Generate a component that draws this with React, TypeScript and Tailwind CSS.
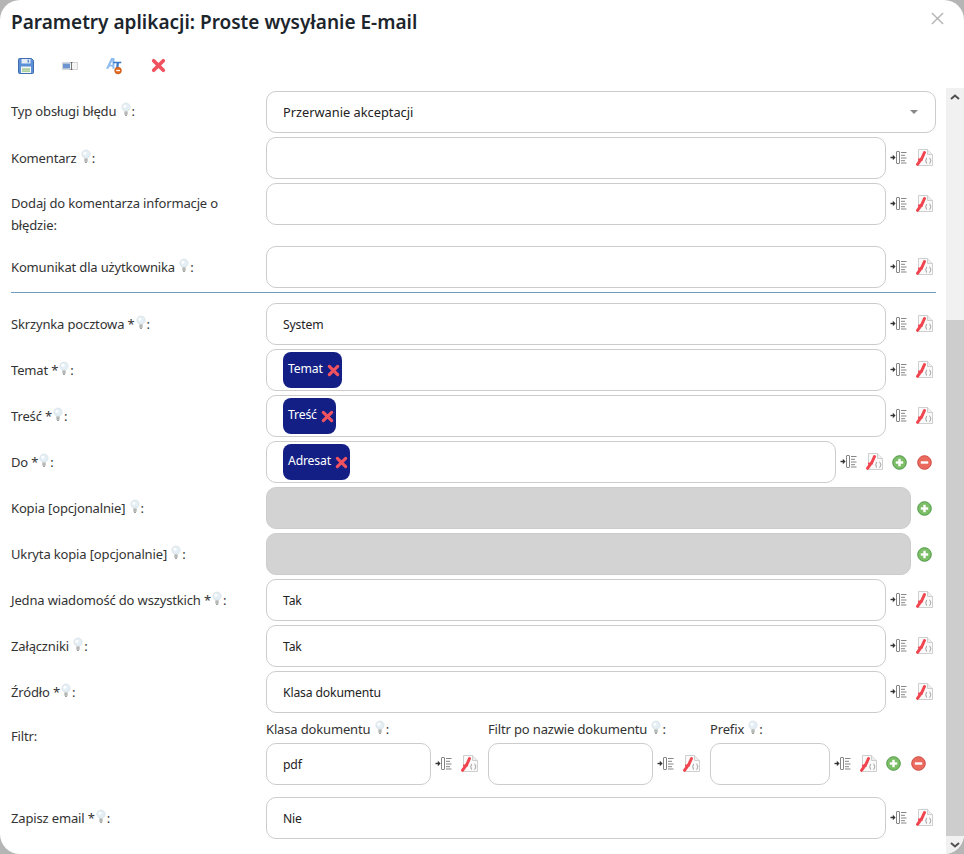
const FONT = "font-['Noto_Sans',sans-serif]";

const Bulb = () => (
  <svg viewBox="0 0 12 16" className="inline-block h-[15px] w-[12px] align-[-1px]" aria-hidden="true">
    <circle cx="6" cy="5.5" r="4.4" fill="#e3eef5" stroke="#d4dde2" strokeWidth="0.7" />
    <circle cx="4.8" cy="4.4" r="1.6" fill="#ffffff" />
    <rect x="4.2" y="10" width="3.6" height="3.6" fill="#b5b9b6" />
    <rect x="5" y="13.6" width="2" height="1.2" fill="#8d918e" />
  </svg>
);

const SaveIcon = () => (
  <svg viewBox="0 0 16 16" className="h-4 w-4" aria-hidden="true">
    <path d="M.5 1.5a1 1 0 0 1 1-1h12l2 2v12a1 1 0 0 1-1 1h-13a1 1 0 0 1-1-1Z" fill="#5b8fd6" stroke="#3f6db0" />
    <rect x="3.5" y="1" width="9" height="4.5" fill="#e8eef7" />
    <rect x="9.5" y="1.6" width="1.6" height="3" fill="#5b8fd6" />
    <rect x="3" y="8.5" width="10" height="6.5" fill="#f3f6f4" />
    <rect x="4" y="10.5" width="8" height="1.2" fill="#8fbf7a" />
    <rect x="4" y="12.5" width="8" height="1.2" fill="#8fbf7a" />
  </svg>
);

const FieldIcon = () => (
  <svg viewBox="0 0 16 8" className="h-2 w-4" aria-hidden="true">
    <rect x="0.5" y="0.5" width="15" height="7" fill="#f4f4f4" stroke="#d6d6d6" />
    <rect x="1" y="1.5" width="7" height="5" fill="#6d94cf" />
    <path d="M8.5 0.5h2M8.5 7.5h2M9.5 0.5v7" stroke="#555" strokeWidth="0.8" fill="none" />
  </svg>
);

const TranslateIcon = () => (
  <svg viewBox="0 0 17 18" className="h-[18px] w-[17px]" aria-hidden="true">
    <path fillRule="evenodd" d="M0 12 5.500 0.500h3.500V12H6.800V9.500H3.800L2.500 12ZM4.700 7.800h2.100V3.500Z" fill="#8fbcee" />
    <path d="M7.500 4.500h9l-.4 1.500h-2.300l-.9 6.500H10.600l.7-6.500H7.500Z" fill="#3a78c9" />
    <circle cx="12.800" cy="13.800" r="3.600" fill="#e3691d" stroke="#b94f12" strokeWidth="0.6" />
    <rect x="10.800" y="13.100" width="4" height="1.400" fill="#fff" />
  </svg>
);

const RedX = ({ size = "h-[13px] w-[13px]" }: { size?: string }) => (
  <svg viewBox="0 0 14 14" className={size} aria-hidden="true">
    <path d="M2.500 2.500 11.500 11.500M11.500 2.500 2.500 11.500" stroke="#f0525f" strokeWidth="3.400" strokeLinecap="round" />
  </svg>
);

const InsertIcon = () => (
  <svg viewBox="0 0 17 13" className="h-[13px] w-[17px] shrink-0" aria-hidden="true">
    <path d="M0.500 6.500H4" stroke="#333" strokeWidth="1.400" />
    <path d="M2.800 3.800 5.600 6.500 2.800 9.200Z" fill="#333" />
    <rect x="6.500" y="0.500" width="3" height="12" rx="0.500" fill="#fff" stroke="#858585" />
    <path d="M11 1.500h5.500M11 4.300h4M11 7h5.500M11 9.700h4M11 12h5.500" stroke="#858585" strokeWidth="1" />
  </svg>
);

const ScriptIcon = () => (
  <svg viewBox="0 0 17 17" className="h-[17px] w-[17px] shrink-0" aria-hidden="true">
    <path d="M2.500 0.500h9l5 5v11h-14Z" fill="#fafafa" stroke="#cfcfcf" />
    <path d="M11.500 0.500v5h5" fill="#eee" stroke="#cfcfcf" />
    <path d="M1.500 15.300 6 9 8.500 3.500" stroke="#f0444f" strokeWidth="3" fill="none" strokeLinecap="round" />
    <path d="M2 10.500h5" stroke="#f0444f" strokeWidth="1.800" />
    <path d="M11 9c-1 0-.6 2.300-1.400 2.800.8.500.4 2.800 1.400 2.800M13.500 9c1 0 .6 2.300 1.400 2.800-.8.500-.4 2.800-1.400 2.800" stroke="#8a8a8a" strokeWidth="0.900" fill="none" />
  </svg>
);

const RoundBtn = ({ kind }: { kind: "plus" | "minus" }) => (
  <svg viewBox="0 0 15 15" className="h-[15px] w-[15px] shrink-0" aria-hidden="true">
    <circle cx="7.500" cy="7.500" r="6.800" fill={kind === "plus" ? "#7cbd68" : "#ea6a5e"} stroke={kind === "plus" ? "#4f9a44" : "#cf4a42"} />
    <rect x="3.800" y="6.300" width="7.400" height="2.400" fill="#fff" />
    {kind === "plus" && <rect x="6.300" y="3.800" width="2.400" height="7.400" fill="#fff" />}
  </svg>
);

const Label = ({ text, star, bulb = true }: { text: string; star?: boolean; bulb?: boolean }) => (
  <span>
    {text}
    {star ? " *" : " "}
    {bulb && <Bulb />}:
  </span>
);

const Chip = ({ text }: { text: string }) => (
  <span className="flex h-9 items-center gap-1 rounded-lg bg-[#141f85] pl-[5px] pr-[2px] text-[12.2px] text-white">
    <span className="pb-[2px]">{text}</span>
    <RedX />
  </span>
);

const Tools = () => (
  <div className="ml-[4px] flex items-center gap-[9px] pb-[2px]">
    <InsertIcon />
    <ScriptIcon />
  </div>
);

type RowProps = {
  label: React.ReactNode;
  value?: string;
  chip?: string;
  disabled?: boolean;
  plus?: boolean;
  minus?: boolean;
};

const Row = ({ label, value, chip, disabled, plus, minus }: RowProps) => (
  <div className="mb-1 flex h-[42px] text-[13px] tracking-[-0.15px] text-[#333]">
    <div className="w-[266px] shrink-0 self-center pb-[1px] pl-[11px] pr-3 leading-[22px]">{label}</div>
    <div
      className={`flex min-w-0 flex-1 items-center rounded-[10px] border border-[#ccc] px-4 text-[12.2px] text-[#222] ${
        disabled ? "bg-[#d3d3d3]" : "bg-white"
      }`}
    >
      {chip ? <Chip text={chip} /> : <span className="pt-[2px]">{value}</span>}
    </div>
    <div className="flex items-center">
      {!disabled && <Tools />}
      {plus && (
        <span className={disabled ? "ml-[6px]" : "ml-[9px]"}>
          <RoundBtn kind="plus" />
        </span>
      )}
      {minus && (
        <span className="ml-[10px]">
          <RoundBtn kind="minus" />
        </span>
      )}
      {!plus && <span className="w-[3px]" />}
      {disabled && <span className="w-[4px]" />}
      {minus && <span className="w-[4px]" />}
    </div>
  </div>
);

const SubField = ({ label, value, w, extra }: { label: React.ReactNode; value?: string; w: string; extra?: boolean }) => (
  <div className="flex flex-col">
    <div className="h-[26px] leading-[25px]">{label}</div>
    <div className="flex h-[42px]">
      <div className={`flex items-center rounded-[10px] border border-[#ccc] bg-white px-4 text-[12.2px] text-[#222] ${w}`}>
        <span className="pt-[2px]">{value}</span>
      </div>
      <Tools />
      {extra && (
        <div className="ml-[9px] flex items-center gap-[10px] pb-[2px]">
          <RoundBtn kind="plus" />
          <RoundBtn kind="minus" />
        </div>
      )}
    </div>
  </div>
);

export default function App() {
  return (
    <div className={`${FONT} h-[854px] w-[964px] overflow-hidden bg-[#b5b5b5]`}>
      <div className="flex h-full flex-col overflow-hidden rounded-[20px] bg-white">
        <header className="flex h-[44px] shrink-0 items-start justify-between pl-[11px] pr-[20px] pt-[8px]">
          <h1 className="text-[19px] font-semibold leading-[28px] text-[#1c252c]">
            Parametry aplikacji: Proste wysyłanie E-mail
          </h1>
          <svg viewBox="0 0 14 14" className="mt-[4px] h-[13px] w-[13px]" aria-hidden="true">
            <path d="M1 1 13 13M13 1 1 13" stroke="#b4b4b4" strokeWidth="1.500" />
          </svg>
        </header>

        <div className="flex h-[44px] shrink-0 items-center pb-[1px]">
          <span className="ml-[18px] flex w-4 justify-center"><SaveIcon /></span>
          <span className="ml-[28px] flex w-4 justify-center"><FieldIcon /></span>
          <span className="ml-[28px] flex w-4 justify-center"><TranslateIcon /></span>
          <span className="ml-[28px] flex w-4 justify-center"><RedX size="h-[15px] w-[15px]" /></span>
        </div>

        <div className="flex min-h-0 flex-1">
          <main className="min-w-0 flex-1 overflow-hidden pr-[10px] pt-[3px]">
            <div className="mb-1 flex h-[42px] text-[13px] tracking-[-0.15px] text-[#333]">
              <div className="w-[266px] shrink-0 self-center pb-[1px] pl-[11px]"><Label text="Typ obsługi błędu" /></div>
              <div className="flex flex-1 items-center justify-between rounded-[10px] border border-[#ccc] bg-white pl-4 pr-[17px] text-[12.8px] tracking-normal text-[#222]">
                <span className="pt-[1px]">Przerwanie akceptacji</span>
                <span className="h-0 w-0 border-x-[4px] border-t-[4px] border-x-transparent border-t-[#888]" />
              </div>
            </div>
            <Row label={<Label text="Komentarz" />} />
            <div className="h-[46px]">
              <div className="flex h-[42px] text-[13px] tracking-[-0.15px] text-[#333]">
                <div className="w-[266px] shrink-0 pl-[11px] pr-3 pt-[9px] leading-[22px]">
                  Dodaj do komentarza informacje o błędzie:
                </div>
                <div className="flex-1 rounded-[10px] border border-[#ccc] bg-white" />
                <div className="flex items-center"><Tools /><span className="w-[3px]" /></div>
              </div>
            </div>
            <div className="h-[17px]" />
            <Row label={<Label text="Komunikat dla użytkownika" />} />
            <hr className="mb-[10px] ml-[11px] border-t border-[#6f9bbd]" />
            <Row label={<Label text="Skrzynka pocztowa" star />} value="System" />
            <Row label={<Label text="Temat" star />} chip="Temat" />
            <Row label={<Label text="Treść" star />} chip="Treść" />
            <Row label={<Label text="Do" star />} chip="Adresat" plus minus />
            <Row label={<Label text="Kopia [opcjonalnie]" />} disabled plus />
            <Row label={<Label text="Ukryta kopia [opcjonalnie]" />} disabled plus />
            <Row label={<Label text="Jedna wiadomość do wszystkich" star />} value="Tak" />
            <Row label={<Label text="Załączniki" />} value="Tak" />
            <Row label={<Label text="Źródło" star />} value="Klasa dokumentu" />
            <div className="mb-3 flex text-[13px] tracking-[-0.15px] text-[#333]">
              <div className="w-[266px] shrink-0 pl-[11px] pt-[10px]">Filtr:</div>
              <div className="flex gap-[10px]">
                <SubField label={<Label text="Klasa dokumentu" />} value="pdf" w="w-[165px]" />
                <SubField label={<Label text="Filtr po nazwie dokumentu" />} w="w-[165px]" />
                <SubField label={<Label text="Prefix" />} w="w-[120px]" extra />
              </div>
            </div>
            <Row label={<Label text="Zapisz email" star />} value="Nie" />
          </main>

          <aside className="flex w-[18px] shrink-0 flex-col bg-[#f1f1f1]">
            <div className="flex h-[17px] items-center justify-center">
              <svg viewBox="0 0 10 6" className="h-[6px] w-[10px]" aria-hidden="true">
                <path d="M1 5 5 1.500 9 5" fill="none" stroke="#505050" strokeWidth="2" />
              </svg>
            </div>
            <div className="h-[215px]" />
            <div className="flex-1 bg-[#cdcdcd]" />
            <div className="flex h-[18px] items-center justify-center">
              <svg viewBox="0 0 10 6" className="h-[6px] w-[10px]" aria-hidden="true">
                <path d="M1 1 5 4.500 9 1" fill="none" stroke="#505050" strokeWidth="2" />
              </svg>
            </div>
          </aside>
        </div>
      </div>
    </div>
  );
}
